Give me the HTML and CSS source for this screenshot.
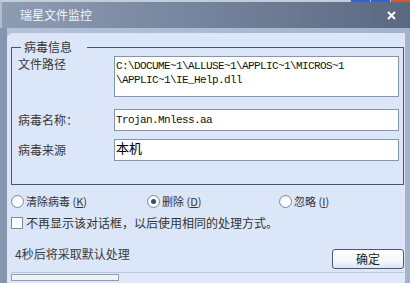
FILE: index.html
```html
<!DOCTYPE html>
<html lang="zh">
<head>
<meta charset="utf-8">
<title>瑞星文件监控</title>
<link rel="stylesheet" href="styles.css">
</head>
<body>
<div class="screen">
  <div class="topline">
    <div class="topline-left"></div>
    <div class="topline-right">
      <span class="tb tb-blue"></span><span class="tb tb-blue"></span><span class="tb tb-red"></span>
    </div>
  </div>
  <div class="window">
    <div class="titlebar">
      <span class="title">瑞星文件监控</span>
      <svg class="close" width="9" height="9" viewBox="0 0 9 9"><path d="M1 1 L8 8 M8 1 L1 8" stroke="#ffffff" stroke-width="2" fill="none"/></svg>
    </div>
    <div class="frame">
      <div class="client">
        <fieldset class="group">
          <legend class="legend">病毒信息</legend>
          <div class="row row-top">
            <span class="label label-top">文件路径</span>
            <div class="box box-tall mono">C:\DOCUME~1\ALLUSE~1\APPLIC~1\MICROS~1<br>\APPLIC~1\IE_Help.dll</div>
          </div>
          <div class="row row-name">
            <span class="label">病毒名称：</span>
            <div class="box box-line mono">Trojan.Mnless.aa</div>
          </div>
          <div class="row row-src">
            <span class="label">病毒来源</span>
            <div class="box box-line box-cjk">本机</div>
          </div>
        </fieldset>
        <div class="options">
          <label class="opt"><span class="radio"></span><span class="opt-text">清除病毒 (<u>K</u>)</span></label>
          <label class="opt"><span class="radio radio-on"></span><span class="opt-text">删除 (<u>D</u>)</span></label>
          <label class="opt"><span class="radio"></span><span class="opt-text">忽略 (<u>I</u>)</span></label>
        </div>
        <div class="check">
          <span class="checkbox"></span><span class="check-text">不再显示该对话框，以后使用相同的处理方式。</span>
        </div>
        <div class="footer">
          <span class="countdown">4秒后将采取默认处理</span>
          <button class="ok">确定</button>
        </div>
        <div class="status">
          <div class="progress"></div>
        </div>
      </div>
    </div>
  </div>
</div>
</body>
</html>
```

FILE: styles.css
```css
html, body {
  margin: 0;
  padding: 0;
}
body {
  width: 410px;
  height: 283px;
  overflow: hidden;
  background: #c9d1de;
  font-family: "Noto Sans CJK SC", "DejaVu Sans", sans-serif;
  font-size: 12px;
  color: #333333;
}
.screen {
  width: 410px;
  height: 283px;
  display: flex;
  flex-direction: column;
}
.topline {
  height: 2px;
  display: flex;
}
.topline-left {
  flex: 1;
  background: #c4ccd9;
}
.topline-right {
  width: 60px;
  display: flex;
  background: #2f64d2;
}
.tb {
  width: 20px;
  height: 2px;
  border-left: 1px solid #a8bde8;
  box-sizing: border-box;
}
.tb-blue { background: #2f64d2; }
.tb-red { background: #d9572a; }
.window {
  flex: 1;
  display: flex;
  flex-direction: column;
  background: #a6b5cc;
}
.titlebar {
  height: 26px;
  display: flex;
  align-items: center;
  justify-content: space-between;
  padding: 0 14px 0 20px;
  background: linear-gradient(to right, #8e9cb3 0%, #7786a0 45%, #5b6882 100%);
  border-left: 2px solid #b3bccb;
  box-sizing: border-box;
}
.title {
  color: #f3f5f9;
  font-size: 12px;
  line-height: 14px;
  margin-left: -2px;
}
.close {
  display: block;
}
.frame {
  flex: 1;
  display: flex;
  padding: 5px 5px 0 0;
  border-left: 7px solid #8595ae;
  background: linear-gradient(to right, #b4c2d8, #a4b3cb);
  min-height: 0;
}
.client {
  flex: 1;
  display: flex;
  flex-direction: column;
  background: #dbe7f9;
  border-top-left-radius: 6px;
  padding: 0 1px 0 4px;
  overflow: hidden;
}
.group {
  margin: 7px 0 0 0;
  padding: 2px 4px 23px 6px;
  border: 1px solid #465370;
  min-width: 0;
}
.legend {
  margin-left: 3px;
  padding: 0 15px 0 3px;
  line-height: 14px;
  font-size: 12px;
  color: #333333;
}
.row {
  display: grid;
  grid-template-columns: 96px 1fr;
  align-items: center;
}
.row-top {
  align-items: start;
}
.row-name {
  margin-top: 12px;
}
.row-src {
  margin-top: 8px;
}
.label {
  line-height: 14px;
  color: #3a3a3a;
}
.label-top {
  padding-top: 1px;
}
.box {
  background: #ffffff;
  border: 1px solid #8296b0;
  box-sizing: border-box;
  color: #111111;
}
.box-tall {
  height: 41px;
  padding: 2px 1px;
}
.box-line {
  height: 22px;
  padding: 0 1px;
  display: flex;
  align-items: center;
}
.box-cjk {
  align-items: flex-start;
  font-size: 13px;
  line-height: 16px;
  color: #000000;
}
.mono {
  font-family: "Liberation Mono", "DejaVu Sans Mono", monospace;
  font-size: 11px;
  letter-spacing: -0.6px;
  line-height: 14px;
}
.options {
  display: grid;
  grid-template-columns: 136px 132px auto;
  margin-top: 9px;
  height: 14px;
  align-items: center;
}
.opt {
  display: flex;
  align-items: center;
}
.radio {
  width: 13px;
  height: 13px;
  box-sizing: border-box;
  border-radius: 50%;
  border: 1px solid #7d8ca6;
  background: radial-gradient(circle at 60% 60%, #ffffff 40%, #e2e8f2 100%);
  margin-right: 2px;
  display: flex;
  align-items: center;
  justify-content: center;
  flex: none;
}
.radio-on::after {
  content: "";
  width: 5px;
  height: 5px;
  border-radius: 50%;
  background: #3d4a66;
}
.opt-text {
  font-size: 11px;
  line-height: 14px;
  color: #333333;
}
.opt-text u {
  text-underline-offset: 1px;
}
.check {
  display: flex;
  align-items: center;
  margin-top: 8px;
  height: 14px;
}
.checkbox {
  width: 12px;
  height: 12px;
  box-sizing: border-box;
  border: 1px solid #7c8ba4;
  background: #ffffff;
  margin-right: 3px;
  flex: none;
}
.check-text {
  line-height: 14px;
  color: #333333;
}
.footer {
  display: flex;
  justify-content: space-between;
  align-items: flex-start;
  margin-top: 17px;
}
.countdown {
  padding-left: 4px;
  line-height: 14px;
  color: #3a3a3a;
}
.ok {
  margin-top: 2px;
  width: 72px;
  height: 20px;
  box-sizing: border-box;
  border: 1px solid #4b5670;
  border-radius: 3px;
  background: linear-gradient(to bottom, #ffffff 0%, #f4f6fa 60%, #dfe5ee 100%);
  font-family: "Noto Sans CJK SC", sans-serif;
  font-size: 12px;
  line-height: 14px;
  color: #222222;
  padding: 0;
}
.status {
  margin-top: 3px;
  border-top: 1px solid #b8c5da;
  flex: 1;
  background: #dde8f8;
}
.progress {
  margin: 1px 0 0 0;
  width: 108px;
  height: 7px;
  box-sizing: border-box;
  border: 1px solid #8e9cb4;
  background: #eef2f9;
}
```
